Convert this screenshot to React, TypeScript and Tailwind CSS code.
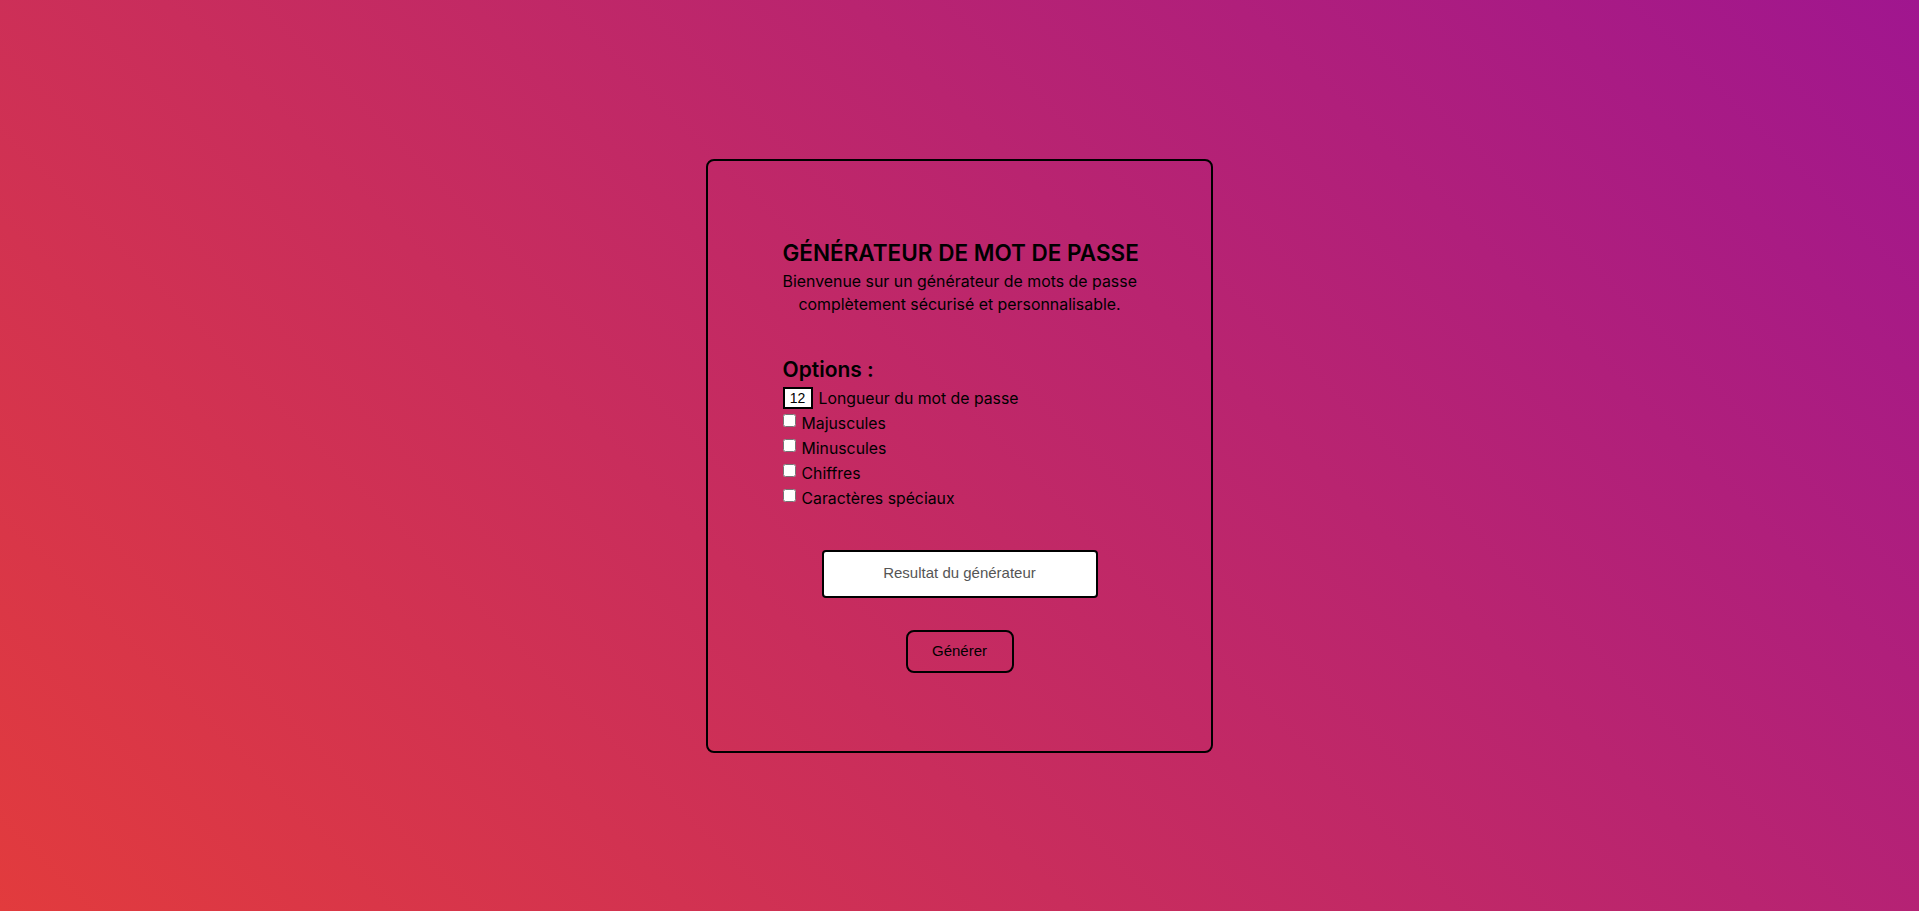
import React, { useState } from 'react';

const options = ['Majuscules', 'Minuscules', 'Chiffres', 'Caractères spéciaux'];

export default function App() {
    const [length, setLength] = useState('12');
    const [checked, setChecked] = useState<Record<string, boolean>>({});

    return (
        <div className="min-h-screen w-full flex items-center justify-center bg-[linear-gradient(45deg,#e23b3d,#a0168f)] font-['Inter','Noto_Sans',sans-serif] text-black">
            {/* Card */}
            <div className="w-[507px] h-[594px] border-2 border-black rounded-lg flex flex-col items-center pt-[77px]">
                <div className="w-[354px] flex flex-col">
                    <h1 className="text-[22.5px] leading-[30px] font-semibold text-center whitespace-nowrap">
                        GÉNÉRATEUR DE MOT DE PASSE
                    </h1>
                    <p className="mt-[2px] text-[15.9px] leading-[23px] text-center whitespace-nowrap">
                        Bienvenue sur un générateur de mots de passe
                        <br />
                        complètement sécurisé et personnalisable.
                    </p>

                    {/* Options */}
                    <h2 className="mt-[40px] text-[21px] leading-[28px] font-semibold">Options :</h2>
                    <div className="mt-[2px] flex flex-col text-[15.8px] leading-[25px]">
                        <div className="h-[25px] flex items-center">
                            <input
                                type="text"
                                value={length}
                                onChange={(e) => setLength(e.target.value)}
                                className="w-[30px] h-[22px] border-2 border-black bg-white text-center text-[14px] font-['Liberation_Sans',sans-serif] outline-none"
                            />
                            <span className="ml-[6px]">Longueur du mot de passe</span>
                        </div>
                        {options.map((opt) => (
                            <label key={opt} className="h-[25px] flex items-start">
                                <input
                                    type="checkbox"
                                    checked={!!checked[opt]}
                                    onChange={() => setChecked({ ...checked, [opt]: !checked[opt] })}
                                    className="mt-[3px] w-[13px] h-[13px] m-0"
                                />
                                <span className="ml-[6px]">{opt}</span>
                            </label>
                        ))}
                    </div>
                </div>

                {/* Result */}
                <div className="mt-[39px] w-[276px] h-[48px] bg-white border-2 border-black rounded-[4px] flex items-center justify-center text-[15px] text-[#555] font-['Liberation_Sans',sans-serif]">
                    Resultat du générateur
                </div>

                <button className="mt-[32px] w-[108px] h-[43px] border-2 border-black rounded-lg text-[15px] font-['Liberation_Sans',sans-serif] text-black">
                    Générer
                </button>
            </div>
        </div>
    );
}
